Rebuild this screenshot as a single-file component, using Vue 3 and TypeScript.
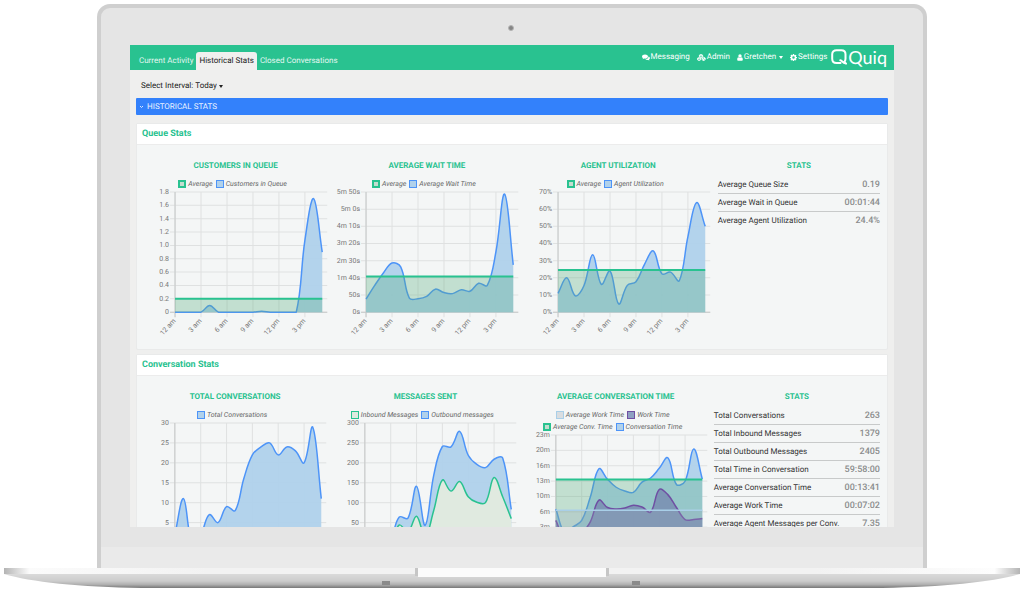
<script setup lang="ts">
import { ref } from 'vue'

type Tone = 'average' | 'primary' | 'inbound' | 'work' | 'averageWork'

interface Series {
  name: string
  tone: Tone
  values: number[]
}

interface ChartDef {
  title: string
  max: number
  ticks: string[]
  tickStep: number
  legend: string[][]
  height: number
  series: Series[]
}

interface Section {
  id: string
  title: string
  charts: ChartDef[]
  stats: [string, string][]
}

const POINTS = 18
const LEFT = 35
const TOP = 2
const SPAN = 147
const GRID_END = 187
const TENSION = 0.38

const hours = ['12 am', '3 am', '6 am', '9 am', '12 pm', '3 pm']
const flat = (v: number): number[] => Array.from({ length: POINTS }, () => v)

const sections: Section[] = [
  {
    id: 'queue',
    title: 'Queue Stats',
    charts: [
      {
        title: 'CUSTOMERS IN QUEUE',
        max: 1.8,
        tickStep: 0.2,
        ticks: ['0', '0.2', '0.4', '0.6', '0.8', '1.0', '1.2', '1.4', '1.6', '1.8'],
        legend: [['Average', 'Customers in Queue']],
        height: 120,
        series: [
          { name: 'Average', tone: 'average', values: flat(0.2) },
          {
            name: 'Customers in Queue',
            tone: 'primary',
            values: [0, 0, 0, 0, 0.1, 0, 0, 0, 0, 0, 0.015, 0, 0, 0, 0, 1.08, 1.7, 0.9],
          },
        ],
      },
      {
        title: 'AVERAGE WAIT TIME',
        max: 350,
        tickStep: 50,
        ticks: ['0s', '50s', '1m 40s', '2m 30s', '3m 20s', '4m 10s', '5m 0s', '5m 50s'],
        legend: [['Average', 'Average Wait Time']],
        height: 120,
        series: [
          { name: 'Average', tone: 'average', values: flat(104) },
          {
            name: 'Average Wait Time',
            tone: 'primary',
            values: [38, 78, 114, 143, 132, 41, 39, 46, 67, 57, 54, 65, 61, 84, 78, 176, 344, 138],
          },
        ],
      },
      {
        title: 'AGENT UTILIZATION',
        max: 70,
        tickStep: 10,
        ticks: ['0%', '10%', '20%', '30%', '40%', '50%', '60%', '70%'],
        legend: [['Average', 'Agent Utilization']],
        height: 120,
        series: [
          { name: 'Average', tone: 'average', values: flat(24.5) },
          {
            name: 'Agent Utilization',
            tone: 'primary',
            values: [11, 20, 9.5, 15.5, 33.5, 16.2, 24, 4.8, 15.6, 17.7, 28, 35.7, 22.3, 23.3, 18.3, 44, 63.8, 50],
          },
        ],
      },
    ],
    stats: [
      ['Average Queue Size', '0.19'],
      ['Average Wait in Queue', '00:01:44'],
      ['Average Agent Utilization', '24.4%'],
    ],
  },
  {
    id: 'conversation',
    title: 'Conversation Stats',
    charts: [
      {
        title: 'TOTAL CONVERSATIONS',
        max: 30,
        tickStep: 5,
        ticks: ['0', '5', '10', '15', '20', '25', '30'],
        legend: [['Total Conversations']],
        height: 120,
        series: [
          {
            name: 'Total Conversations',
            tone: 'primary',
            values: [2, 11, 0, 2, 7, 5, 9, 8, 16, 22, 24, 25, 22, 24, 23, 20, 29, 11],
          },
        ],
      },
      {
        title: 'MESSAGES SENT',
        max: 300,
        tickStep: 50,
        ticks: ['0', '50', '100', '150', '200', '250', '300'],
        legend: [['Inbound Messages', 'Outbound messages']],
        height: 120,
        series: [
          {
            name: 'Inbound Messages',
            tone: 'inbound',
            values: [2, 6, 1, 3, 44, 27, 66, 14, 81, 157, 129, 153, 115, 101, 100, 163, 115, 60],
          },
          {
            name: 'Outbound messages',
            tone: 'primary',
            values: [6, 14, 2, 12, 64, 61, 141, 43, 169, 241, 240, 279, 219, 196, 188, 209, 212, 83],
          },
        ],
      },
      {
        title: 'AVERAGE CONVERSATION TIME',
        max: 1400,
        tickStep: 200,
        ticks: ['0m', '3m', '6m', '10m', '13m', '16m', '20m', '23m'],
        legend: [
          ['Average Work Time', 'Work Time'],
          ['Average Conv. Time', 'Conversation Time'],
        ],
        height: 108,
        series: [
          { name: 'Average Work Time', tone: 'averageWork', values: flat(422) },
          {
            name: 'Work Time',
            tone: 'work',
            values: [288, 50, 40, 120, 270, 552, 456, 438, 450, 486, 462, 396, 690, 624, 456, 300, 300, 312],
          },
          { name: 'Average Conv. Time', tone: 'average', values: flat(821) },
          {
            name: 'Conversation Time',
            tone: 'primary',
            values: [438, 130, 204, 288, 594, 960, 822, 720, 672, 654, 786, 840, 966, 1104, 756, 798, 1218, 828],
          },
        ],
      },
    ],
    stats: [
      ['Total Conversations', '263'],
      ['Total Inbound Messages', '1379'],
      ['Total Outbound Messages', '2405'],
      ['Total Time in Conversation', '59:58:00'],
      ['Average Conversation Time', '00:13:41'],
      ['Average Work Time', '00:07:02'],
      ['Average Agent Messages per Conv.', '7.35'],
    ],
  },
]

const tabs = ['Current Activity', 'Historical Stats', 'Closed Conversations']
const activeTab = ref('Historical Stats')
const interval = ref('Today')
const open = ref(true)

const px = (i: number): number => LEFT + (i * SPAN) / (POINTS - 1)
const py = (c: ChartDef, v: number): number => TOP + c.height * (1 - v / c.max)
const tone = (c: ChartDef, name: string): Tone =>
  c.series.find((s) => s.name === name)?.tone ?? 'primary'

/* Smoothed line whose control points are kept inside the plot area. */
function linePath(c: ChartDef, values: number[]): string {
  const pts = values.map((v, i) => ({ x: px(i), y: py(c, v) }))
  const cap = (y: number): number => Math.min(TOP + c.height, Math.max(TOP, y))
  const ctrl = pts.map((p, i) => {
    const a = pts[i - 1] ?? p
    const b = pts[i + 1] ?? p
    const before = Math.hypot(p.x - a.x, p.y - a.y)
    const after = Math.hypot(b.x - p.x, b.y - p.y)
    const total = before + after
    const fa = (TENSION * before) / total
    const fb = (TENSION * after) / total
    return {
      inX: p.x - fa * (b.x - a.x),
      inY: cap(p.y - fa * (b.y - a.y)),
      outX: p.x + fb * (b.x - a.x),
      outY: cap(p.y + fb * (b.y - a.y)),
    }
  })
  return pts
    .map((p, i) => {
      if (i === 0) return `M${p.x.toFixed(2)} ${p.y.toFixed(2)}`
      const o = ctrl[i - 1]
      const n = ctrl[i]
      return `C${[o.outX, o.outY, n.inX, n.inY, p.x, p.y].map((v) => v.toFixed(2)).join(' ')}`
    })
    .join('')
}

const areaPath = (c: ChartDef, values: number[]): string =>
  `${linePath(c, values)}V${TOP + c.height}H${LEFT}Z`
</script>

<template>
  <main class="laptop">
    <div class="lid">
      <div class="bezel"><span class="camera"></span></div>
      <div class="screen">
        <header class="topbar">
          <nav class="tabs" aria-label="Views">
            <a
              v-for="t in tabs"
              :key="t"
              href="#"
              class="tab"
              :class="{ active: t === activeTab }"
              @click.prevent="activeTab = t"
              >{{ t }}</a
            >
          </nav>
          <nav class="tools" aria-label="Account">
            <a href="#" class="tool">
              <svg class="icon" viewBox="0 0 16 14">
                <path d="M6 1C2.700 1 0 2.800 0 5.200c0 1.300.8 2.400 2 3.200L1.200 10.300 4 9.200c.6.1 1.300.2 2 .2 3.300 0 6-1.900 6-4.200S9.300 1 6 1z" />
                <path d="M13 4.800c.1 3-2.800 5.500-6.400 5.700 1 .9 2.600 1.500 4.300 1.400l1.300-.1 2.700 1.300-.8-1.900c1.200-.7 1.900-1.800 1.900-3 0-1.500-1.200-2.800-3-3.400z" />
              </svg>
              Messaging</a
            >
            <a href="#" class="tool">
              <svg class="icon wide" viewBox="0 0 18 14">
                <g fill="none" stroke="#fff" stroke-width="2">
                  <path d="M8 1l3.200 1.500v3L8 7 4.800 5.500v-3zM4.200 7.200l3 1.400v3l-3 1.400-3-1.400v-3z" />
                  <path d="M13.200 6.500l3.200 1.800v3L13.200 13 10 11.300v-3zM5 2.600l3 1.500 3-1.500M10.200 8.400l3 1.400 3-1.400M13.200 10v3M1.400 8.700l2.800 1.400 2.800-1.400" />
                </g>
              </svg>
              Admin</a
            >
            <button type="button" class="tool">
              <svg class="icon slim" viewBox="0 0 12 14">
                <circle cx="6" cy="4" r="3.400" />
                <path d="M2.700 6.500C1.200 7 .4 8.700.4 11c0 1.500.9 2.600 2.300 2.600h6.600c1.400 0 2.300-1.100 2.300-2.600 0-2.300-.8-4-2.300-4.500-.8.900-2 1.500-3.300 1.500s-2.500-.6-3.300-1.500z" />
              </svg>
              Gretchen
              <span class="caret"></span>
            </button>
            <a href="#" class="tool">
              <svg class="icon gear" viewBox="0 0 14 14">
                <path
                  fill-rule="evenodd"
                  d="M5.800 0h2.400l.4 1.900 1.100.5 1.600-1.100L13 3l-1.100 1.600.5 1.200 1.600.3v2.200l-1.700.4-.5 1.100 1.200 1.500-1.700 1.700-1.600-1.100-1.200.5L8.200 14H5.800l-.4-1.700-1.100-.4L2.700 13 1 11.300l1.100-1.600-.5-1.100L0 8.200V5.900l1.600-.4.5-1.100L1 2.800l1.700-1.700 1.600 1.200 1.100-.5zM7 4.500A2.500 2.500 0 1 0 7 9.500 2.500 2.500 0 1 0 7 4.500z"
                />
              </svg>
              Settings</a
            >
            <a href="#" class="brand" aria-label="Quiq">
              <svg class="mark" viewBox="0 0 16 16">
                <path
                  d="M9.500 14H5.500C3 14 1.200 12.300 1.200 9.800V5.200C1.200 2.700 3 1.200 5.500 1.200h4.800c2.500 0 4.200 1.500 4.200 4v4.600c0 1.300-.4 2.200-1.100 3L15 14.600M9.300 11.200c1 .1 1.500.7 2.100 1.400.7.900 1.700 1.700 3.600 2"
                  fill="none"
                  stroke="#fff"
                  stroke-width="2"
                  stroke-linecap="round"
                  stroke-linejoin="round"
                />
              </svg>
              <span>Quiq</span>
            </a>
          </nav>
        </header>

        <div class="filter">
          <label for="interval">Select Interval:</label>
          <select id="interval" v-model="interval">
            <option>Today</option>
            <option>Yesterday</option>
            <option>Last 7 Days</option>
          </select>
          <span class="caret"></span>
        </div>

        <div class="content">
          <button type="button" class="fold" :aria-expanded="open" @click="open = !open">
            <svg class="chevron" viewBox="0 0 5 4">
              <path d="M1 1l1.500 1.500L4 1" fill="none" stroke="#fff" stroke-width=".8" />
            </svg>
            HISTORICAL STATS
          </button>

          <template v-if="open">
            <section v-for="s in sections" :key="s.id" class="panel">
              <h2>{{ s.title }}</h2>
              <div class="columns" :class="s.id">
                <article v-for="c in s.charts" :key="c.title" class="chart">
                  <h3>{{ c.title }}</h3>
                  <div class="legend">
                    <div v-for="(row, r) in c.legend" :key="r" class="legend-row">
                      <span v-for="name in row" :key="name" class="key">
                        <i class="swatch" :class="tone(c, name)"></i>{{ name }}
                      </span>
                    </div>
                  </div>
                  <svg class="plot" :viewBox="`0 0 191 ${c.height + 39}`" role="img" :aria-label="c.title">
                    <g class="grid">
                      <line
                        v-for="(t, i) in c.ticks"
                        :key="t"
                        :x1="LEFT - 5"
                        :x2="GRID_END"
                        :y1="py(c, i * c.tickStep)"
                        :y2="py(c, i * c.tickStep)"
                      />
                      <line
                        v-for="(h, i) in hours"
                        :key="h"
                        :x1="px(i * 3)"
                        :x2="px(i * 3)"
                        :y1="TOP"
                        :y2="TOP + c.height + 5"
                      />
                    </g>
                    <g class="axis">
                      <line :x1="LEFT" :x2="LEFT" :y1="TOP" :y2="TOP + c.height + 5" />
                      <line :x1="LEFT - 5" :x2="GRID_END" :y1="TOP + c.height" :y2="TOP + c.height" />
                    </g>
                    <g v-for="d in [...c.series].reverse()" :key="d.name" :class="['series', d.tone]">
                      <path class="area" :d="areaPath(c, d.values)" />
                      <path class="line" :d="linePath(c, d.values)" />
                    </g>
                    <text
                      v-for="(t, i) in c.ticks"
                      :key="'y' + t"
                      class="tick"
                      :x="LEFT - 6"
                      :y="py(c, i * c.tickStep) + 2"
                      >{{ t }}</text
                    >
                    <text
                      v-for="(h, i) in hours"
                      :key="'x' + h"
                      class="tick"
                      :transform="`translate(${px(i * 3) + 1} ${TOP + c.height + 9}) rotate(-48)`"
                      >{{ h }}</text
                    >
                  </svg>
                </article>
                <article class="stats">
                  <h3>STATS</h3>
                  <table>
                    <tbody>
                      <tr v-for="[label, value] in s.stats" :key="label">
                        <th scope="row">{{ label }}</th>
                        <td>{{ value }}</td>
                      </tr>
                    </tbody>
                  </table>
                </article>
              </div>
            </section>
          </template>
        </div>
      </div>
      <div class="lip"></div>
      <div class="chin"></div>
    </div>
    <svg class="base" viewBox="0 0 1024 20" aria-hidden="true">
      <defs>
        <linearGradient id="deck" x1="0" x2="1" y1="0" y2="0">
          <stop offset="0" stop-color="#b4b4b4" />
          <stop offset="0.025" stop-color="#fbfbfb" />
          <stop offset="0.2" stop-color="#f2f2f2" />
          <stop offset="0.8" stop-color="#f2f2f2" />
          <stop offset="0.975" stop-color="#fdfdfd" />
          <stop offset="1" stop-color="#b4b4b4" />
        </linearGradient>
        <linearGradient id="under" gradientUnits="userSpaceOnUse" x1="0" x2="0" y1="6" y2="20">
          <stop offset="0" stop-color="#dadada" />
          <stop offset="0.5" stop-color="#cccccc" />
          <stop offset="0.75" stop-color="#b0b0b0" />
          <stop offset="1" stop-color="#777777" />
        </linearGradient>
      </defs>
      <path d="M4 6C30 14 80 19 142 20H882C944 19 994 14 1020 6z" fill="url(#under)" />
      <rect x="4" width="1016" height="6" fill="url(#deck)" />
      <rect x="415" width="194" height="8" fill="#c6c6c6" />
      <rect x="418" width="188" height="9" fill="#fbfbfb" />
      <rect x="382" y="13" width="8" height="4" fill="#8a8a8a" />
      <rect x="632" y="13" width="8" height="4" fill="#8a8a8a" />
    </svg>
  </main>
</template>

<style>
body {
  margin: 0;
  background: #fff;
}
</style>

<style scoped>
.laptop {
  font-family: Roboto, 'Liberation Sans', sans-serif;
  font-size: 8px;
  line-height: 12px;
  text-rendering: geometricPrecision;
  color: #333;
  padding-top: 4px;
}
.lid {
  margin: 0 97px;
  border: 4px solid #cfcfcf;
  border-bottom: 0;
  border-radius: 13px 13px 0 0;
  background: #e5e5e5;
}
.bezel {
  display: flex;
  justify-content: center;
  align-items: center;
  height: 37px;
}
.camera {
  width: 4px;
  height: 4px;
  margin: 0 3px -3px 0;
  border: 1px solid #b4b4b4;
  border-radius: 50%;
  background: #858585;
}
.screen {
  margin: 0 29px;
  aspect-ratio: 764 / 482;
  overflow: hidden;
  background: #efefee;
}
.lip {
  height: 20px;
}
.chin {
  height: 21px;
  background: #eaeaea;
}
.base {
  display: block;
  width: 100%;
}

a,
button {
  color: inherit;
  text-decoration: none;
}
button,
select {
  appearance: none;
  margin: 0;
  padding: 0;
  border: 0;
  background: none;
  font: inherit;
  color: inherit;
  text-rendering: inherit;
}

.topbar {
  display: flex;
  justify-content: space-between;
  height: 25px;
  padding: 0 7px 0 6px;
  background: #29c290;
  color: #fff;
}
.tabs {
  display: flex;
  align-items: flex-end;
}
.tab {
  padding: 3px 3px;
  border-radius: 3px 3px 0 0;
  color: #e3f7f0;
}
.tab.active {
  background: #f0f0ef;
  color: #222;
}
.tools {
  display: flex;
  align-items: center;
  height: 24px;
  gap: 7px;
}
.tool {
  display: flex;
  align-items: center;
  gap: 1px;
}
.icon {
  width: 8px;
  height: 7px;
  fill: #fff;
}
.icon.wide {
  width: 9px;
}
.icon.slim {
  width: 6px;
}
.icon.gear {
  width: 7px;
}
.caret {
  margin-left: 2px;
  border: 2px solid transparent;
  border-top: 3px solid currentColor;
  border-bottom: 0;
}
.brand {
  display: flex;
  align-items: center;
  gap: 1px;
  margin-left: -3px;
  font: 400 18px/22px Lato, Roboto, sans-serif;
}
.mark {
  width: 16px;
  height: 16px;
}

.filter {
  display: flex;
  align-items: center;
  gap: 2px;
  height: 28px;
  padding: 4px 11px 0;
  box-sizing: border-box;
  color: #222;
}
.filter select {
  field-sizing: content;
}
.filter .caret {
  margin-left: 0;
}

.content {
  padding: 0 6px;
}
.fold {
  display: flex;
  align-items: center;
  gap: 3px;
  width: 100%;
  height: 17px;
  margin-bottom: 8px;
  padding: 0 3px;
  border-radius: 1px;
  background: #3381fb;
  color: #e8f1ff;
}
.chevron {
  width: 5px;
  height: 4px;
}

.panel {
  margin-bottom: 4px;
  border: 1px solid #e9eaea;
  border-radius: 2px;
  background: #f4f6f6;
}
h2,
h3 {
  margin: 0;
  color: #29c290;
  font-weight: 700;
}
h2 {
  padding: 4px 5px;
  border-bottom: 1px solid #ececec;
  background: #fff;
  font-size: 9px;
  line-height: 12px;
}
h3 {
  font-size: 8px;
  line-height: 12px;
  text-align: center;
}
.columns {
  display: grid;
  padding: 15px 7px 0 3px;
}
.columns.queue {
  grid-template-columns: 191fr 191fr 191fr 166fr;
}
.columns.conversation {
  grid-template-columns: 190fr 190fr 190fr 169fr;
}
.legend {
  margin-top: 6px;
  padding-right: 6px;
  color: #666;
  font-size: 7px;
  font-style: italic;
}
.legend-row {
  display: flex;
  justify-content: center;
  gap: 3px;
}
.key {
  display: flex;
  align-items: center;
  gap: 2px;
  white-space: nowrap;
}
.swatch {
  box-sizing: border-box;
  width: 8px;
  height: 8px;
  border: 1px solid;
}
.swatch.average {
  border: 2px solid #29c290;
  background: #c3decf;
}
.swatch.primary {
  border-color: #4d94f8;
  background: #b0d1eb;
}
.swatch.inbound {
  border-color: #29c290;
  background: #e0eae0;
}
.swatch.work {
  border-color: #6f4fa3;
  background: #8ea0c2;
}
.swatch.averageWork {
  border-color: #a9cfe8;
  background: #d9dde0;
}
.plot {
  display: block;
  width: 100%;
  overflow: visible;
}
.grid line {
  stroke: #dfe1e1;
  stroke-width: 1;
}
.axis line {
  stroke: #c6c8c8;
  stroke-width: 1;
}
.area {
  stroke: none;
}
.line {
  fill: none;
  stroke-width: 1.5;
  stroke-linejoin: round;
}
.series.primary .area {
  fill: #b0d1eb;
  fill-opacity: 0.96;
}
.series.primary .line {
  stroke: #4d94f8;
}
.series.average .area {
  fill: rgb(91 173 126 / 0.32);
}
.series.average .line {
  stroke: #29c290;
  stroke-width: 2;
}
.series.inbound .area {
  fill: #e0eae0;
}
.series.inbound .line {
  stroke: #29c290;
}
.series.work .area {
  fill: rgb(109 117 168 / 0.6);
}
.series.work .line {
  stroke: #6f4fa3;
}
.series.averageWork .area {
  fill: rgb(150 165 185 / 0.25);
}
.series.averageWork .line {
  stroke: #a9cfe8;
}
.tick {
  fill: #777;
  font-size: 7px;
  text-anchor: end;
}

.columns .stats {
  padding-left: 4px;
}
.conversation .stats {
  padding-left: 3px;
}
.stats table {
  width: 100%;
  margin-top: 4px;
  border-collapse: collapse;
}
.stats th,
.stats td {
  height: 17px;
  padding: 0;
  border-bottom: 1px solid #c8caca;
  white-space: nowrap;
}
.stats tr:last-child > * {
  border-bottom: 0;
}
.stats th {
  text-align: left;
  font-weight: 400;
}
.stats td {
  text-align: right;
  font-size: 9px;
  font-weight: 500;
  color: #8a8c8c;
}
</style>
